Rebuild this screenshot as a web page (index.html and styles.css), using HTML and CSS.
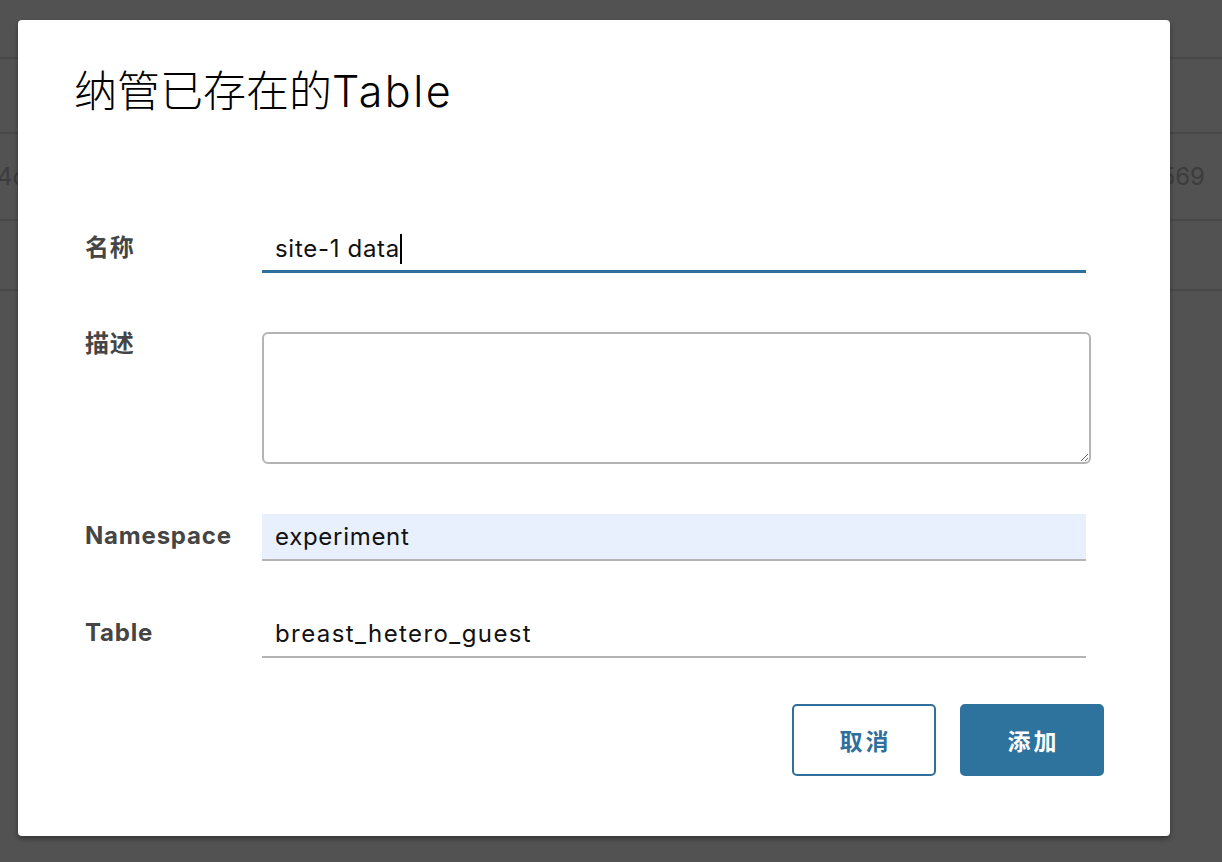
FILE: index.html
```html
<!DOCTYPE html>
<html lang="zh-CN">
<head>
<meta charset="utf-8">
<title>纳管已存在的Table</title>
<link rel="stylesheet" href="styles.css">
</head>
<body>
<div class="page">
  <div class="bg-row r1"></div>
  <div class="bg-row r2"></div>
  <div class="bg-row r3"><span class="cell-left">4c</span><span class="cell-right">569</span></div>
  <div class="bg-row r4"></div>
</div>

<div class="modal">
  <h1 class="modal-title">纳管已存在的<span class="title-latin">Table</span></h1>
  <form class="form">
    <div class="row row-name">
      <label class="label">名称</label>
      <div class="field focused"><span class="value">site-1 data</span><span class="caret"></span></div>
    </div>
    <div class="row row-desc">
      <label class="label label-top">描述</label>
      <textarea class="textarea"></textarea>
    </div>
    <div class="row row-ns">
      <label class="label">Namespace</label>
      <input class="field input autofill" value="experiment">
    </div>
    <div class="row row-table">
      <label class="label">Table</label>
      <input class="field input wide" value="breast_hetero_guest">
    </div>
    <div class="actions">
      <button type="button" class="btn btn-outline">取消</button>
      <button type="button" class="btn btn-primary">添加</button>
    </div>
  </form>
</div>
</body>
</html>
```

FILE: styles.css
```css
* { box-sizing: border-box; }

html, body {
  margin: 0;
  padding: 0;
  width: 1222px;
  height: 862px;
  overflow: hidden;
  background: #525252;
  font-family: Inter, "Noto Sans CJK SC", sans-serif;
}

.page {
  display: flex;
  flex-direction: column;
}

.bg-row {
  border-bottom: 2px solid #484848;
  display: flex;
  align-items: center;
  justify-content: space-between;
  color: #3c3c3c;
  font-size: 24px;
}
.r1 { height: 59px; }
.r2 { height: 75px; }
.r3 { height: 87px; }
.r4 { height: 70px; }

.cell-left { margin-left: -3px; }
.cell-right { margin-right: 17px; }

.modal {
  position: absolute;
  left: 18px;
  top: 20px;
  width: 1152px;
  height: 816px;
  background: #fff;
  border-radius: 4px;
  box-shadow: 0 3px 5px rgba(0, 0, 0, 0.35);
  padding: 46px 66px 0 56px;
}

.modal-title {
  margin: 0;
  font-weight: 300;
  font-size: 43px;
  line-height: 50px;
  color: #000;
}

.title-latin {
  font-weight: 300;
  letter-spacing: 2.5px;
}

.form {
  margin-top: 110px;
  padding-left: 11px;
}

.row {
  display: grid;
  grid-template-columns: 177px 824px;
  align-items: center;
}

.row-desc { margin-top: 59px; align-items: start; grid-template-columns: 177px 829px; }
.row-ns { margin-top: 50px; }
.row-table { margin-top: 50px; }

.label {
  font-weight: 700;
  font-size: 24px;
  letter-spacing: 0.8px;
  color: #454545;
  line-height: 28px;
  margin-bottom: 4px;
}

.label-top { margin-top: -2px; margin-bottom: 0; }

.field {
  height: 47px;
  border: 0;
  border-bottom: 2px solid #b4b4b4;
  padding: 0 13px;
  font-family: inherit;
  font-size: 24px;
  letter-spacing: 0.7px;
  color: #111;
  background: transparent;
  display: flex;
  align-items: center;
  outline: none;
  width: 100%;
}

.wide { letter-spacing: 1.4px; }

.focused {
  border-bottom: 3px solid #2f6f9b;
  padding-top: 1px;
}

.caret {
  display: inline-block;
  width: 2px;
  height: 30px;
  background: #000;
  margin-left: 0;
}

.autofill { background: #e8f0fe; }

.textarea {
  height: 132px;
  width: 100%;
  border: 2px solid #b4b4b4;
  border-radius: 6px;
  font-family: inherit;
  font-size: 20px;
  outline: none;
  resize: both;
}

.actions {
  display: flex;
  justify-content: flex-end;
  gap: 24px;
  margin-top: 46px;
  width: 1019px;
}

.btn {
  width: 144px;
  height: 72px;
  border-radius: 5px;
  font-family: Inter, "Noto Sans CJK SC", sans-serif;
  font-weight: 700;
  font-size: 23px;
  letter-spacing: 3px;
  padding: 0 0 0 3px;
  cursor: pointer;
}

.btn-outline {
  background: #fff;
  border: 2px solid #2f6f9b;
  color: #2f6f9b;
}

.btn-primary {
  background: #2e729e;
  border: 2px solid #2e729e;
  color: #fff;
}
```
